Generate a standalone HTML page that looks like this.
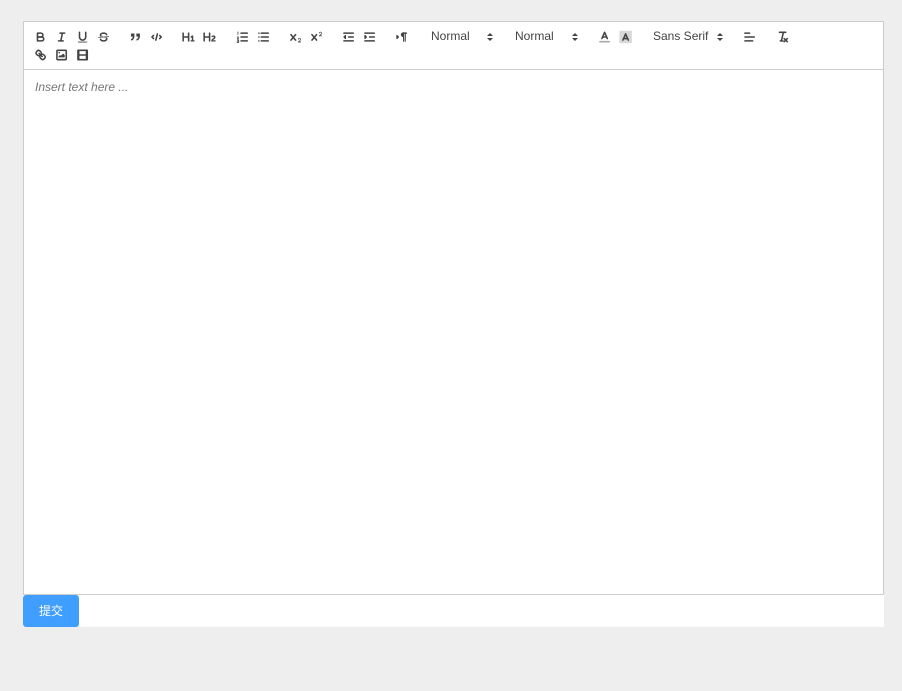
<!DOCTYPE html>
<html lang="zh">
<head>
<meta charset="utf-8">
<title>Editor</title>
<style>
html,body{margin:0;padding:0;width:902px;height:691px;overflow:hidden;background:#eee;font-family:"Liberation Sans","Noto Sans CJK SC",sans-serif}
.wrap{position:absolute;left:23px;top:21px;width:861px;height:606px;background:#fff}
.ed{position:absolute;left:23px;top:21px;width:859px;height:572px;border:1px solid #ccc}
.bar{position:absolute;left:23px;top:69px;width:861px;height:1px;background:#ccc}
svg.i{position:absolute;width:14px;height:14px;top:30px;fill:none;stroke:#444;stroke-width:2;stroke-linecap:round;stroke-linejoin:round;overflow:visible;transform:translateX(.6px)}
svg.r2{top:48px}
svg.i .f{fill:#444;stroke:none}
svg.i .t{stroke-width:1}
svg.i .fs{fill:#444;stroke:#444;stroke-width:1.5}
.lbl{position:absolute;top:28px;font-size:12px;line-height:16px;color:#444;white-space:nowrap}
.ar{position:absolute;width:0;height:0;border-left:3px solid transparent;border-right:3px solid transparent}
.up{top:32.5px;border-bottom:3.5px solid #444}
.dn{top:37.5px;border-top:3.5px solid #444}
.ph{position:absolute;left:35px;top:79px;font-size:12px;line-height:16px;font-style:italic;color:#777;white-space:nowrap}
.btn{position:absolute;left:23px;top:595px;width:56px;height:32px;background:#409eff;border-radius:3px;color:#fff;font-size:12px;line-height:32px;text-align:center}
</style>
</head>
<body>
<div class="wrap"></div>
<div class="ed"></div>
<div class="bar"></div>

<svg class="i" style="left:33px" viewBox="0 0 18 18"><path d="M5,4H9.5A2.5,2.5,0,0,1,12,6.5v0A2.5,2.5,0,0,1,9.5,9H5V4Z"/><path d="M5,9h5.5A2.5,2.5,0,0,1,13,11.5v0A2.5,2.5,0,0,1,10.5,14H5V9Z"/></svg>
<svg class="i" style="left:54px" viewBox="0 0 18 18"><line x1="7" x2="13" y1="4" y2="4"/><line x1="5" x2="11" y1="14" y2="14"/><line x1="8" x2="10" y1="14" y2="4"/></svg>
<svg class="i" style="left:75px" viewBox="0 0 18 18"><path d="M5,3V9a4,4,0,0,0,4,4H9a4,4,0,0,0,4-4V3"/><rect class="f" height="1" rx=".5" ry=".5" width="12" x="3" y="15"/></svg>
<svg class="i" style="left:96px" viewBox="0 0 18 18"><line class="t" x1="15.5" x2="2.5" y1="8.5" y2="9.5"/><path class="f" d="M9.007,8C6.542,7.791,6,7.519,6,6.5,6,5.792,7.283,5,9,5c1.571,0,2.765.679,2.969,1.309a1,1,0,0,0,1.9-.617C13.356,4.106,11.354,3,9,3,6.2,3,4,4.538,4,6.5a3.2,3.2,0,0,0,.5,1.843Z"/><path class="f" d="M8.984,10C11.457,10.208,12,10.479,12,11.5c0,.708-1.283,1.5-3,1.5-1.571,0-2.765-.679-2.969-1.309a1,1,0,1,0-1.9.617C4.644,13.894,6.646,15,9,15c2.8,0,5-1.538,5-3.5a3.2,3.2,0,0,0-.5-1.843Z"/></svg>

<svg class="i" style="left:128px" viewBox="0 0 18 18"><rect class="f" height="4" width="4.5" x="3" y="4.5"/><rect class="f" height="4" width="4.5" x="10" y="4.5"/><path d="M6.5,8c0,3-2.5,4.5-2.5,4.5"/><path d="M13.5,8c0,3-2.5,4.5-2.5,4.5"/></svg>
<svg class="i" style="left:149px" viewBox="0 0 18 18"><polyline points="5 7 3 9 5 11"/><polyline points="13 7 15 9 13 11"/><line x1="10" x2="8" y1="5" y2="13"/></svg>

<svg class="i" style="left:181px" viewBox="0 0 18 18"><path class="f" d="M10,4V14a1,1,0,0,1-2,0V10H3v4a1,1,0,0,1-2,0V4A1,1,0,0,1,3,4V8H8V4a1,1,0,0,1,2,0Zm6.06787,9.209H14.98975V7.59863a.54085.54085,0,0,0-.605-.60547h-.62744a1.01119,1.01119,0,0,0-.748.29688L11.645,8.56641a.5435.5435,0,0,0-.022.8584l.28613.30762a.53861.53861,0,0,0,.84717.0332l.09912-.08789a1.2137,1.2137,0,0,0,.2417-.35254h.02246s-.01123.30859-.01123.60547V13.209H12.041a.54085.54085,0,0,0-.605.60547v.43945a.54085.54085,0,0,0,.605.60547h4.02686a.54085.54085,0,0,0,.605-.60547v-.43945A.54085.54085,0,0,0,16.06787,13.209Z"/></svg>
<svg class="i" style="left:202px" viewBox="0 0 18 18"><path class="f" d="M16.73975,13.81445v.43945a.54085.54085,0,0,1-.605.60547H11.855a.58392.58392,0,0,1-.64893-.60547V14.0127c0-2.90527,3.39941-3.42187,3.39941-4.55469a.77675.77675,0,0,0-.84717-.78125,1.17684,1.17684,0,0,0-.83594.38477c-.2749.26367-.561.374-.85791.13184l-.4292-.34082c-.30811-.24219-.38525-.51758-.1543-.81445a2.97155,2.97155,0,0,1,2.45361-1.17676,2.45393,2.45393,0,0,1,2.68408,2.40918c0,2.45312-3.1792,2.92676-3.27832,3.93848h2.79443A.54085.54085,0,0,1,16.73975,13.81445ZM9,3A.99974.99974,0,0,0,8,4V8H3V4A1,1,0,0,0,1,4V14a1,1,0,0,0,2,0V10H8v4a1,1,0,0,0,2,0V4A.99974.99974,0,0,0,9,3Z"/></svg>

<svg class="i" style="left:235px" viewBox="0 0 18 18"><line x1="7" x2="15" y1="4" y2="4"/><line x1="7" x2="15" y1="9" y2="9"/><line x1="7" x2="15" y1="14" y2="14"/><path class="t" d="M3,2.5V6M2,9h2l-2,2.5h2M2,13h2v3H2M2,14.5h2"/></svg>
<svg class="i" style="left:256px" viewBox="0 0 18 18"><line x1="6" x2="15" y1="4" y2="4"/><line x1="6" x2="15" y1="9" y2="9"/><line x1="6" x2="15" y1="14" y2="14"/><line x1="3" x2="3" y1="4" y2="4"/><line x1="3" x2="3" y1="9" y2="9"/><line x1="3" x2="3" y1="14" y2="14"/></svg>

<svg class="i" style="left:288px" viewBox="0 0 18 18"><path class="f" d="M15.5,15H13.861a3.858,3.858,0,0,0,1.914-2.975,1.8,1.8,0,0,0-1.6-1.751A1.921,1.921,0,0,0,12.021,11.7a.50013.50013,0,1,0,.957.291h0a.914.914,0,0,1,1.053-.725.81.81,0,0,1,.744.762c0,1.076-1.16971,1.86982-1.93971,2.43082A1.45639,1.45639,0,0,0,12,15.5a.5.5,0,0,0,.5.5h3a.5.5,0,0,0,0-1Z"/><path class="f" d="M9.65,5.241a1,1,0,0,0-1.409.108L6,7.964,3.759,5.349A1,1,0,0,0,2.192,6.59178Q2.218,6.62331,2.247,6.651L4.685,9.5,2.247,12.349a1,1,0,0,0,1.412,1.40993L6,11.036l2.241,2.615A1,1,0,0,0,9.858,12.49223q-.02581-.03156-.05441-.06073L7.315,9.5,9.753,6.651A1,1,0,0,0,9.65,5.241Z"/></svg>
<svg class="i" style="left:309px" viewBox="0 0 18 18"><path class="f" d="M15.5,7H13.861a4.015,4.015,0,0,0,1.914-2.975,1.8,1.8,0,0,0-1.6-1.751A1.922,1.922,0,0,0,12.021,3.7a.5.5,0,1,0,.957.291.917.917,0,0,1,1.053-.725.81.81,0,0,1,.744.762c0,1.077-1.164,1.925-1.934,2.486A1.423,1.423,0,0,0,12,7.5a.5.5,0,0,0,.5.5h3a.5.5,0,0,0,0-1Z"/><path class="f" d="M9.651,5.241a1,1,0,0,0-1.41.108L6,7.964,3.759,5.349A1,1,0,0,0,2.192,6.59178Q2.218,6.62331,2.247,6.651L4.685,9.5,2.247,12.349a1,1,0,0,0,1.412,1.40993L6,11.036l2.241,2.615A1,1,0,0,0,9.858,12.49223q-.02581-.03156-.05441-.06073L7.315,9.5,9.753,6.651A1,1,0,0,0,9.651,5.241Z"/></svg>

<svg class="i" style="left:341px" viewBox="0 0 18 18"><line x1="3" x2="15" y1="14" y2="14"/><line x1="3" x2="15" y1="4" y2="4"/><line x1="9" x2="15" y1="9" y2="9"/><polygon class="fs" points="5 7 5 11 3 9"/></svg>
<svg class="i" style="left:362px" viewBox="0 0 18 18"><line x1="3" x2="15" y1="14" y2="14"/><line x1="3" x2="15" y1="4" y2="4"/><line x1="9" x2="15" y1="9" y2="9"/><polygon class="fs" points="3 7 3 11 5 9"/></svg>

<svg class="i" style="left:394px" viewBox="0 0 18 18"><polygon class="fs" points="3 11 5 9 3 7"/><line x1="15" x2="11" y1="4" y2="4"/><path class="f" d="M11,3a3,3,0,0,0,0,6h1V3H11Z"/><rect class="f" height="11" width="1.4" x="10.8" y="4"/><rect class="f" height="11" width="1.4" x="13" y="4"/></svg>

<span class="lbl" style="left:431px">Normal</span>
<i class="ar up" style="left:486.5px"></i><i class="ar dn" style="left:486.5px"></i>
<span class="lbl" style="left:515px">Normal</span>
<i class="ar up" style="left:571.5px"></i><i class="ar dn" style="left:571.5px"></i>

<svg class="i" style="left:596.5px" viewBox="0 0 18 18"><line x1="3" x2="15" y1="15" y2="15" style="stroke:#aaa"/><polyline points="5.5 11 9 3 12.5 11"/><line x1="11.63" x2="6.38" y1="9" y2="9"/></svg>
<svg class="i" style="left:617.5px" viewBox="0 0 18 18"><rect class="f" style="fill:#d8d8d8" x="1" y="1" width="16" height="16"/><polyline points="5.5 13 9 5 12.5 13"/><line x1="11.63" x2="6.38" y1="11" y2="11"/></svg>

<span class="lbl" style="left:653px">Sans Serif</span>
<i class="ar up" style="left:716.5px"></i><i class="ar dn" style="left:716.5px"></i>

<svg class="i" style="left:742px" viewBox="0 0 18 18"><line x1="3" x2="15" y1="9" y2="9"/><line x1="3" x2="13" y1="14" y2="14"/><line x1="3" x2="9" y1="4" y2="4"/></svg>
<svg class="i" style="left:775px" viewBox="0 0 18 18"><line x1="5" x2="13" y1="3" y2="3"/><line x1="6" x2="9.35" y1="14" y2="14"/><line x1="10" x2="7.5" y1="3" y2="14"/><line x1="11" x2="15" y1="11" y2="15"/><line x1="15" x2="11" y1="11" y2="15"/></svg>

<svg class="i r2" style="left:33px" viewBox="0 0 18 18"><line x1="7" x2="11" y1="7" y2="11"/><path d="M8.9,4.577a3.476,3.476,0,0,1,.36,4.679A3.476,3.476,0,0,1,4.577,8.9C3.185,7.5,2.035,6.4,4.217,4.217S7.5,3.185,8.9,4.577Z"/><path d="M13.423,9.1a3.476,3.476,0,0,0-4.679-.36,3.476,3.476,0,0,0,.36,4.679c1.392,1.392,2.5,2.542,4.679.36S14.815,10.5,13.423,9.1Z"/></svg>
<svg class="i r2" style="left:54px" viewBox="0 0 18 18"><rect x="3" y="3" width="12" height="12" rx="1" ry="1"/><circle class="f" cx="6" cy="6" r="1"/><polyline class="f" points="5 12 5 11 7 9 8 10 11 7 13 9 13 12 5 12"/></svg>
<svg class="i r2" style="left:75px" viewBox="0 0 18 18"><path class="f" fill-rule="evenodd" d="M15,2H3A1,1,0,0,0,2,3V15a1,1,0,0,0,1,1H15a1,1,0,0,0,1-1V3A1,1,0,0,0,15,2ZM5,4H13V8H5ZM5,10H13V14H5Z"/></svg>

<div class="ph">Insert text here ...</div>
<div class="btn">提交</div>
</body>
</html>
